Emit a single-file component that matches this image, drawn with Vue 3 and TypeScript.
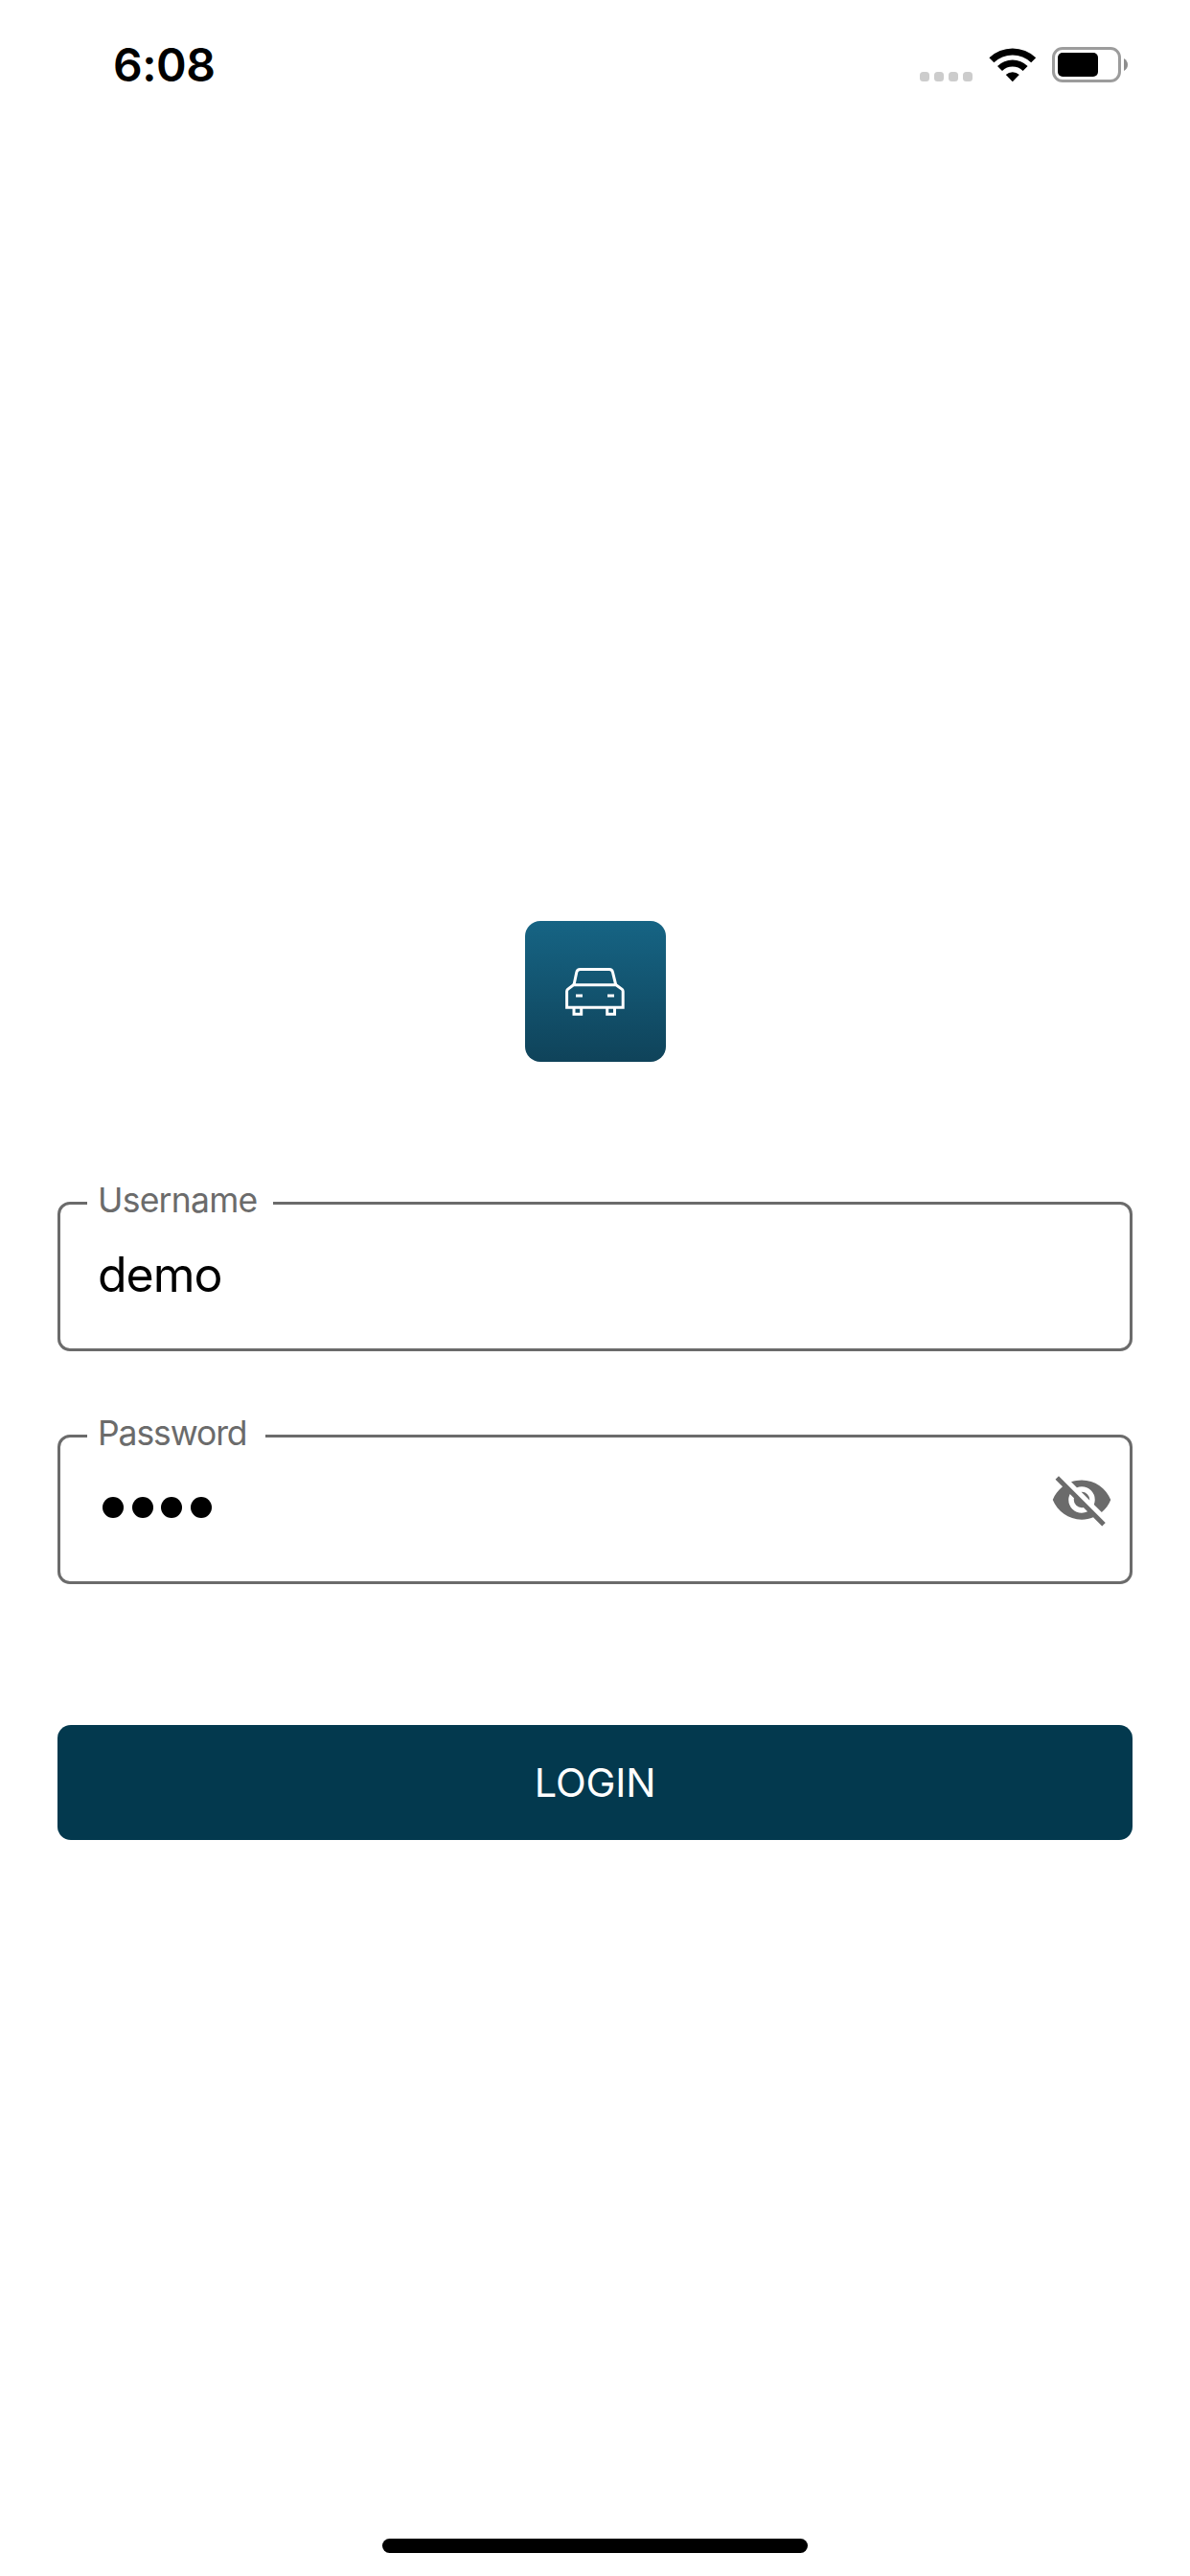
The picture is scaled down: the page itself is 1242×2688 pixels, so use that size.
<script setup lang="ts">
import { ref } from 'vue'

const time = ref('6:08')
const username = ref('demo')
const password = ref('demo')
</script>

<template>
  <div class="screen">
    <header class="status">
      <span class="time">{{ time }}</span>
      <div class="indicators">
        <div class="signal"><i v-for="n in 4" :key="n"></i></div>
        <svg class="wifi" width="50" height="37" viewBox="0 0 50 37">
          <path d="M0.4 11.2A35.3 35.3 0 0 1 49.2 11.2L44.2 16.2A28 28 0 0 0 5.4 16.2Z" />
          <path d="M9 19.9A22.6 22.6 0 0 1 40.6 19.9L35.6 24.9A15.5 15.5 0 0 0 14 24.9Z" />
          <path d="M17.8 29.1A10.2 10.2 0 0 1 31.8 29.1L24.8 36.2Z" />
        </svg>
        <svg class="battery" width="80" height="37" viewBox="0 0 80 37">
          <rect x="1.5" y="1.5" width="69" height="34" rx="9.5" fill="none" stroke="#9c9c9c" stroke-width="3" />
          <rect x="6" y="6" width="42" height="25" rx="5" />
          <path d="M75 12Q79 14.5 79 18.5Q79 22.5 75 25Z" fill="#8e8e8e" />
        </svg>
      </div>
    </header>

    <main class="login">
      <div class="logo">
        <svg width="62" height="50" viewBox="0 0 62 50" fill="none" stroke="#fff" stroke-width="3">
          <path d="M9 17.7L11.8 4.5Q12.5 1.6 15.5 1.6H46Q48.8 1.6 49.5 4.5L52.7 17.7" />
          <path d="M8.5 17.7H53L59.3 22.4Q60.2 23.2 60.2 24.5V41.2H1.6V24.5Q1.6 23.2 2.5 22.4Z" />
          <path d="M11 29H18M44 29H51" />
          <path d="M9 41V48.2H16.7V41M43.7 41V48.2H51.5V41" />
        </svg>
      </div>

      <fieldset class="field">
        <legend class="user-legend"><span class="user-label">Username</span></legend>
        <span class="value">{{ username }}</span>
      </fieldset>

      <fieldset class="field second">
        <legend class="pass-legend"><span class="pass-label">Password</span></legend>
        <div class="dots"><i v-for="(c, n) in password" :key="n"></i></div>
        <svg class="eye" width="66" height="66" viewBox="0 0 24 24" fill="#6b6b6b">
          <path d="M11.83,9L15,12.16C15,12.11 15,12.05 15,12A3,3 0 0,0 12,9C11.94,9 11.89,9 11.83,9M7.53,9.8L9.08,11.35C9.03,11.56 9,11.77 9,12A3,3 0 0,0 12,15C12.22,15 12.44,14.97 12.65,14.92L14.2,16.47C13.53,16.8 12.79,17 12,17A5,5 0 0,1 7,12C7,11.21 7.2,10.47 7.53,9.8M2,4.27L4.28,6.55L4.73,7C3.08,8.3 1.78,10 1,12C2.73,16.39 7,19.5 12,19.5C13.55,19.5 15.03,19.2 16.38,18.66L16.81,19.08L19.73,22L21,20.73L3.27,3M12,7A5,5 0 0,1 17,12C17,12.64 16.87,13.26 16.64,13.82L19.57,16.75C21.07,15.5 22.27,13.86 23,12C21.27,7.61 17,4.5 12,4.5C10.6,4.5 9.26,4.75 8,5.2L10.17,7.35C10.74,7.13 11.35,7 12,7Z" />
        </svg>
      </fieldset>

      <button class="submit" type="button"><span>LOGIN</span></button>
    </main>

    <div class="home"></div>
  </div>
</template>

<style>
body {
  margin: 0;
  background: #fff;
}
</style>

<style scoped>
.screen {
  width: 1242px;
  height: 2688px;
  box-sizing: border-box;
  display: flex;
  flex-direction: column;
  background: #fff;
  color: #000;
  font-family: Inter, "Liberation Sans", sans-serif;
  overflow: hidden;
}
.screen svg {
  display: block;
}
.status {
  height: 136px;
  box-sizing: border-box;
  padding: 49px 64px 0 118px;
  display: flex;
  justify-content: space-between;
  align-items: flex-start;
}
.time {
  font-size: 48px;
  line-height: 38px;
  font-weight: 600;
  letter-spacing: -0.5px;
}
.indicators {
  display: flex;
}
.signal {
  display: flex;
  gap: 5px;
  padding-top: 26px;
  margin-right: 17px;
}
.signal i {
  width: 10px;
  height: 10px;
  border-radius: 3.5px;
  background: #ccc;
}
.wifi {
  margin-right: 16px;
}
.login {
  flex: 1;
  display: flex;
  flex-direction: column;
  padding: 825px 60px 0;
}
.logo {
  width: 147px;
  height: 147px;
  margin-bottom: 146px;
  align-self: center;
  border-radius: 16px;
  background: linear-gradient(#166484, #0f435a);
  display: flex;
  align-items: center;
  justify-content: center;
}
.field {
  margin: 0 0 87px;
  box-sizing: border-box;
  height: 156px;
  min-width: 0;
  border: 3px solid #6b6b6b;
  border-radius: 13px;
  padding: 0 18px 0 28px;
  display: flex;
  align-items: flex-start;
}
.field.second {
  margin-bottom: 147px;
  padding-right: 17px;
  justify-content: space-between;
}
legend {
  height: 3px;
  line-height: 3px;
  padding: 0 0 0 11px;
  box-sizing: border-box;
  font-size: 35.5px;
  color: #6b6b6b;
  white-space: nowrap;
}
legend span {
  position: relative;
  top: -3px;
}
.user-legend {
  width: 194px;
}
.pass-legend {
  width: 186px;
}
.user-label {
  letter-spacing: -0.75px;
}
.pass-label {
  letter-spacing: -1.1px;
}
.value {
  margin: 43px 0 0 11px;
  font-size: 50px;
  line-height: 60px;
  letter-spacing: -1px;
}
.dots {
  display: flex;
  gap: 8.7px;
  margin: 62px 0 0 16px;
}
.dots i {
  width: 22px;
  height: 22px;
  border-radius: 50%;
  background: #000;
}
.eye {
  margin-top: 32px;
}
.submit {
  height: 120px;
  border: 0;
  border-radius: 14px;
  padding: 0;
  background: #03394e;
  color: #fff;
  font-family: inherit;
  font-size: 41.5px;
  line-height: 120px;
  letter-spacing: -0.2px;
}
.home {
  width: 444px;
  height: 15px;
  margin: 0 auto 24px;
  border-radius: 8px;
  background: #000;
}
</style>
